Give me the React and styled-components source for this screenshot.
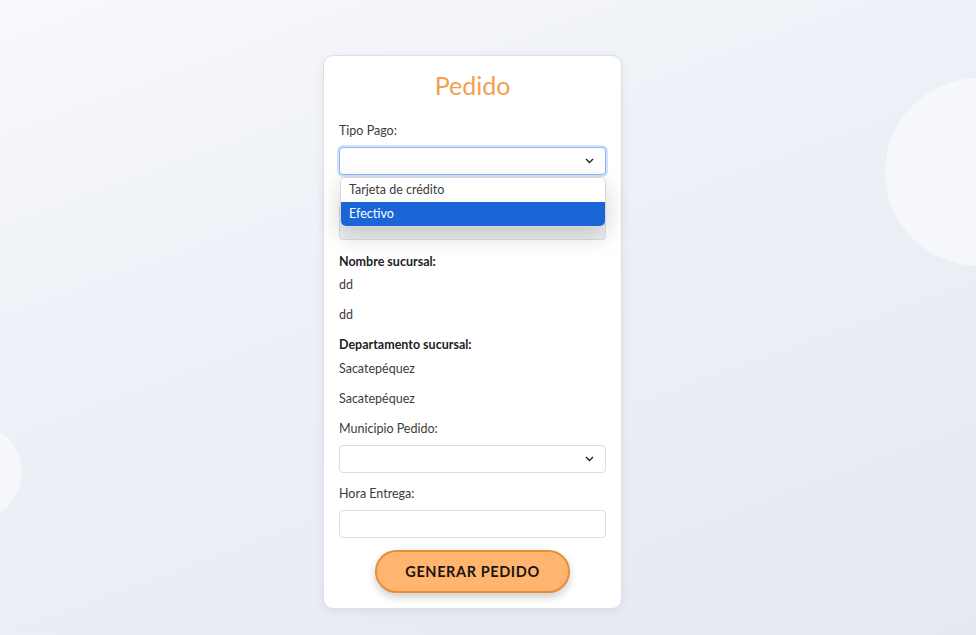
import styled, { createGlobalStyle } from "styled-components"

const GlobalStyle = createGlobalStyle`
  html, body {
    margin: 0;
    padding: 0;
  }
  body {
    font-family: "Lato", "Open Sans", sans-serif;
    color: #333;
  }
`

const Page = styled.div`
  position: relative;
  overflow: hidden;
  width: 976px;
  height: 635px;
  background: linear-gradient(160deg, #f8f9fc 0%, #eef1f7 35%, #e4e9f2 100%);
  display: flex;
  justify-content: center;
  align-items: flex-start;
  padding: 55px 31px 0 0;
  box-sizing: border-box;
`

const Bubble = styled.div`
  position: absolute;
  border-radius: 50%;
  background: rgba(255, 255, 255, 0.5);
  width: ${(p) => p.$size}px;
  height: ${(p) => p.$size}px;
  left: ${(p) => p.$x}px;
  top: ${(p) => p.$y}px;
`

const Card = styled.form`
  position: relative;
  z-index: 1;
  width: 299px;
  box-sizing: border-box;
  background: #fff;
  border: 1px solid #dcdfe6;
  border-radius: 10px;
  box-shadow: 0 2px 8px rgba(40, 50, 80, 0.08);
  padding: 14px 15px 15px;
  display: flex;
  flex-direction: column;
`

const Title = styled.h2`
  margin: 0;
  font-family: "Lato", sans-serif;
  font-weight: 400;
  font-size: 25px;
  line-height: 30px;
  text-align: center;
  color: #f2a04f;
`

const Field = styled.div`
  position: relative;
  display: flex;
  flex-direction: column;
  margin-top: ${(p) => p.$top || 0}px;
`

const Label = styled.label`
  font-size: 12.5px;
  font-weight: ${(p) => (p.$bold ? 700 : 400)};
  color: ${(p) => (p.$bold ? "#1e1e1e" : "#3c3c3c")};
  line-height: 16px;
  margin-top: ${(p) => p.$top || 0}px;
`

const Value = styled.div`
  font-size: 12.5px;
  color: #3c3c3c;
  line-height: 16px;
  margin-top: ${(p) => p.$top || 14}px;
`

const SelectBox = styled.div`
  margin-top: 8px;
  height: 28px;
  box-sizing: border-box;
  border: 1px solid ${(p) => (p.$focus ? "#8fb5ee" : "#dadde2")};
  box-shadow: ${(p) => (p.$focus ? "0 0 0 2px #d3e3fa" : "none")};
  border-radius: 4px;
  background: #fff;
  display: flex;
  align-items: center;
  justify-content: flex-end;
  padding-right: 11px;
`

const TextBox = styled.div`
  margin-top: 8px;
  height: ${(p) => p.$h || 28}px;
  box-sizing: border-box;
  border: 1px solid #dadde2;
  border-radius: 4px;
  background: ${(p) => (p.$disabled ? "#eeeff1" : "#fff")};
`

const Dropdown = styled.ul`
  position: absolute;
  left: 1px;
  right: 0;
  top: 54px;
  margin: 0;
  padding: 0;
  list-style: none;
  background: #fff;
  border: 1px solid #d6d8dc;
  border-radius: 6px;
  overflow: hidden;
  box-shadow: 0 8px 24px rgba(0, 0, 0, 0.18);
  z-index: 3;
`

const Option = styled.li`
  height: 24px;
  line-height: 24px;
  padding-left: 8px;
  font-size: 12.5px;
  color: ${(p) => (p.$active ? "#fff" : "#3c3c3c")};
  background: ${(p) => (p.$active ? "#1a66d6" : "#fff")};
`

const Button = styled.button`
  align-self: center;
  margin-top: 12px;
  width: 195px;
  height: 43px;
  border-radius: 22px;
  border: 2px solid #e38e3a;
  background: #ffb46f;
  color: #1b1510;
  font-family: "Lato", sans-serif;
  font-weight: 700;
  font-size: 14.5px;
  letter-spacing: 0.6px;
  box-shadow: 0 4px 8px rgba(0, 0, 0, 0.2);
  cursor: pointer;
`

const Chevron = () => (
  <svg width="9" height="6" viewBox="0 0 9 6" fill="none">
    <path d="M1 1l3.5 3.5L8 1" stroke="#222" strokeWidth="1.4" />
  </svg>
)

const App = () => {
  return (
    <>
      <GlobalStyle />
      <Page>
        <Bubble $size={188} $x={885} $y={78} />
        <Bubble $size={96} $x={-74} $y={424} />
        <Card>
          <Title>Pedido</Title>

          <Field $top={23}>
            <Label>Tipo Pago:</Label>
            <SelectBox $focus>
              <Chevron />
            </SelectBox>
            <Dropdown>
              <Option>Tarjeta de crédito</Option>
              <Option $active>Efectivo</Option>
            </Dropdown>
          </Field>

          <TextBox $disabled $h={36} style={{ marginTop: 29 }} />

          <Label $bold $top={14}>Nombre sucursal:</Label>
          <Value $top={7}>dd</Value>
          <Value>dd</Value>

          <Label $bold $top={14}>Departamento sucursal:</Label>
          <Value $top={8}>Sacatepéquez</Value>
          <Value>Sacatepéquez</Value>

          <Field $top={14}>
            <Label>Municipio Pedido:</Label>
            <SelectBox>
              <Chevron />
            </SelectBox>
          </Field>

          <Field $top={13}>
            <Label>Hora Entrega:</Label>
            <TextBox />
          </Field>

          <Button type="button">GENERAR PEDIDO</Button>
        </Card>
      </Page>
    </>
  )
}

export default App
